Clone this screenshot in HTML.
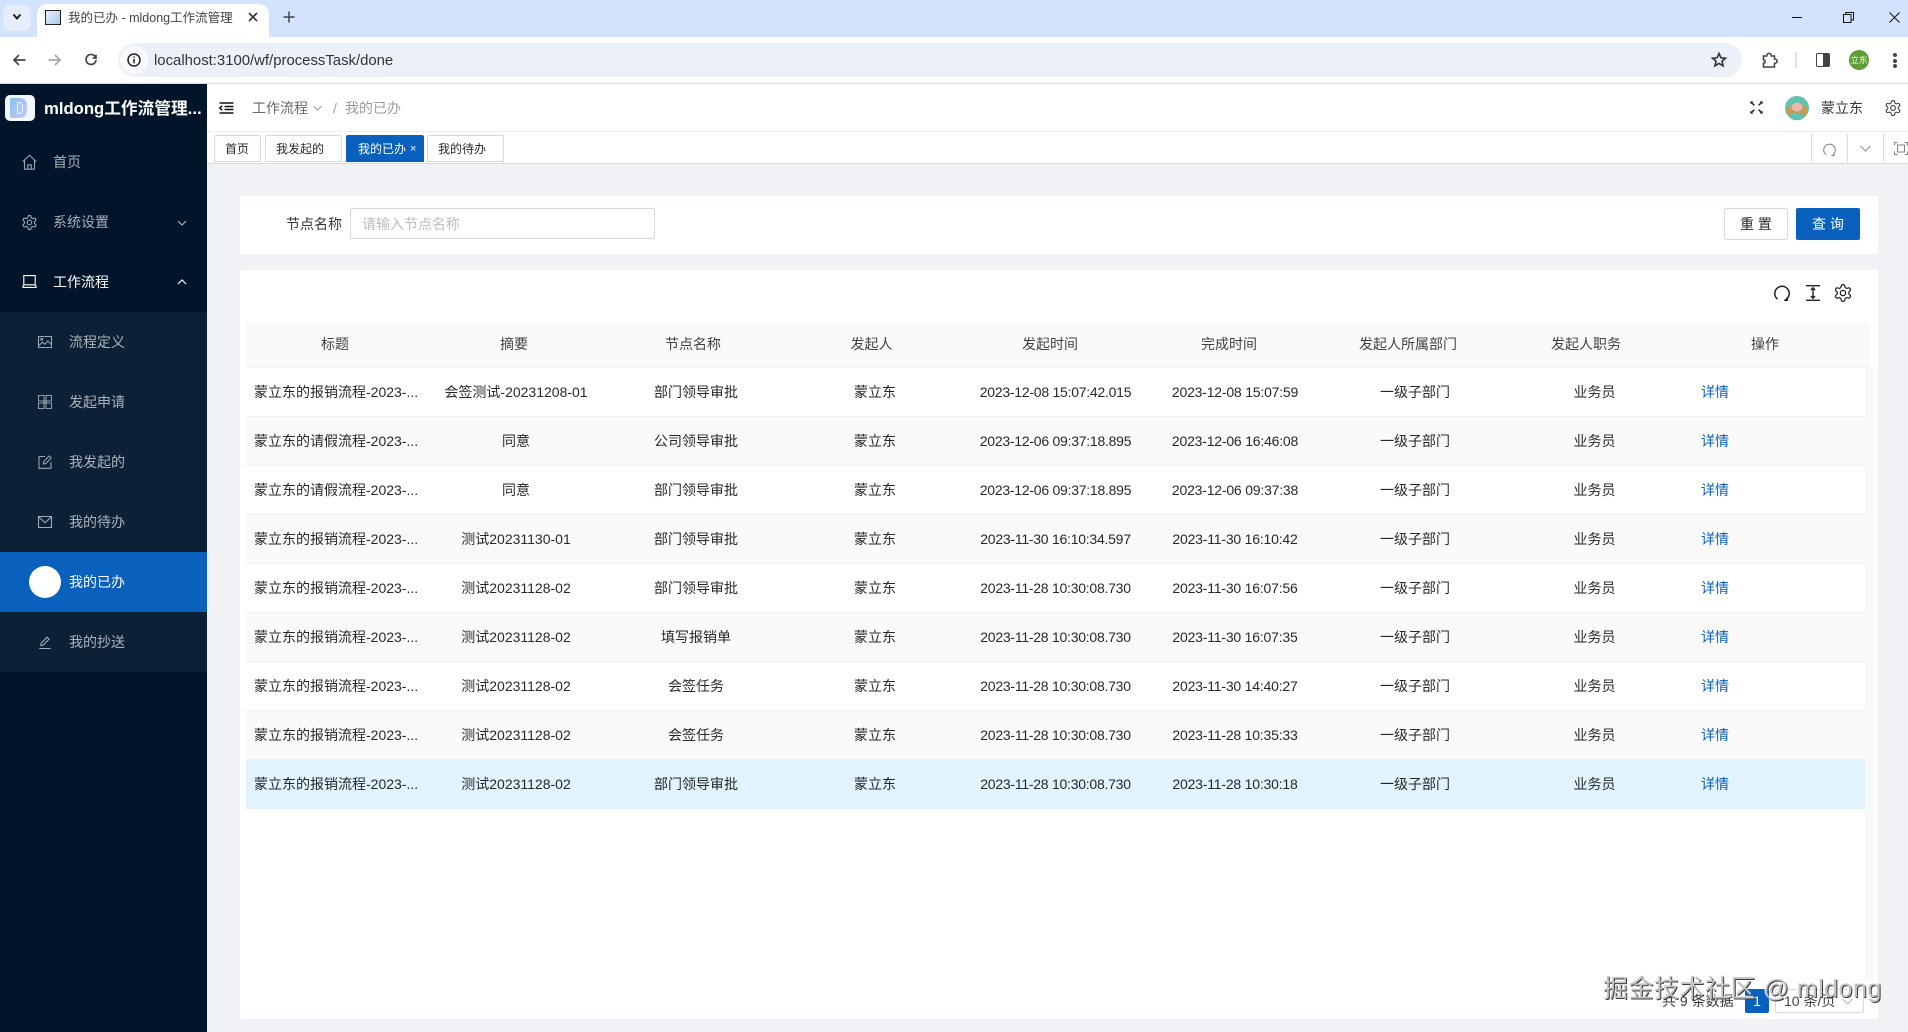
<!DOCTYPE html>
<html lang="zh-CN">
<head>
<meta charset="utf-8">
<title>我的已办 - mldong工作流管理</title>
<style>
html,body{margin:0;padding:0;width:1908px;height:1032px;overflow:hidden;background:#f0f2f5}
body{position:relative;font-family:"Liberation Sans","Noto Sans CJK SC",sans-serif;font-size:14px;color:rgba(0,0,0,.85)}
.a{position:absolute}
.t{position:absolute;white-space:nowrap;line-height:20px;height:20px}
svg{position:absolute;overflow:visible;fill:none;stroke:currentColor}
.tab{position:absolute;top:135px;height:27px;box-sizing:border-box;border:1px solid #d9d9d9;background:#fff;font-size:12px;line-height:26px;color:rgba(0,0,0,.85);white-space:nowrap;border-radius:2px 2px 0 0}
.m{color:rgba(255,255,255,.65)}
.row{position:absolute;left:246px;width:1619px;height:49px;box-sizing:border-box;border-bottom:1px solid #f0f0f0}
.row span{position:absolute;top:14px;line-height:20px;white-space:nowrap;transform:translateX(-50%)}
.row .c1{left:8px;transform:none}
.row .c2{left:270px}.row .c3{left:450px}.row .c4{left:629px}
.row .c5{left:809.5px;letter-spacing:-.25px}.row .c6{left:989px;letter-spacing:-.2px}
.row .c7{left:1169px}.row .c8{left:1348.5px}
.row .c9{left:1455px;transform:none;color:#0960bd}
.th{position:absolute;top:334px;line-height:20px;white-space:nowrap;transform:translateX(-50%);color:rgba(0,0,0,.75)}
</style>
</head>
<body>
<svg width="0" height="0" style="position:absolute">
<defs>
<symbol id="gear" viewBox="0 0 24 24"><path fill="none" stroke="currentColor" d="M12.22 2h-.44a2 2 0 0 0-2 2v.18a2 2 0 0 1-1 1.73l-.43.25a2 2 0 0 1-2 0l-.15-.08a2 2 0 0 0-2.73.73l-.22.38a2 2 0 0 0 .73 2.73l.15.1a2 2 0 0 1 1 1.72v.51a2 2 0 0 1-1 1.74l-.15.09a2 2 0 0 0-.73 2.73l.22.38a2 2 0 0 0 2.73.73l.15-.08a2 2 0 0 1 2 0l.43.25a2 2 0 0 1 1 1.73V20a2 2 0 0 0 2 2h.44a2 2 0 0 0 2-2v-.18a2 2 0 0 1 1-1.73l.43-.25a2 2 0 0 1 2 0l.15.08a2 2 0 0 0 2.73-.73l.22-.39a2 2 0 0 0-.73-2.73l-.15-.08a2 2 0 0 1-1-1.74v-.5a2 2 0 0 1 1-1.74l.15-.09a2 2 0 0 0 .73-2.73l-.22-.38a2 2 0 0 0-2.73-.73l-.15.08a2 2 0 0 1-2 0l-.43-.25a2 2 0 0 1-1-1.73V4a2 2 0 0 0-2-2z"/><circle fill="none" stroke="currentColor" cx="12" cy="12" r="3.2"/></symbol>
</defs>
</svg>

<!-- Browser tab strip -->
<div class="a" style="left:0;top:0;width:1908px;height:37px;background:#d3e3fd"></div>
<div class="a" style="left:3px;top:5px;width:28px;height:26px;background:#e6eefc;border-radius:8px"></div>
<svg style="left:12px;top:13px;color:#1f1f1f;stroke-width:2" width="10" height="8" viewBox="0 0 10 8"><path d="M1.5 1.5 5 5.5 8.5 1.5"/></svg>
<div class="a" style="left:37px;top:4px;width:232px;height:33px;background:#fff;border-radius:10px 10px 0 0"></div>
<div class="a" style="left:45px;top:10px;width:16px;height:15px;box-sizing:border-box;border:1.5px solid #222;background:linear-gradient(135deg,#e4f0fa,#a9c9ee)"></div>
<div class="t" style="left:68px;top:8px;width:167px;overflow:hidden;font-size:12.5px;color:#444">我的已办 - mldong工作流管理</div>
<svg style="left:248px;top:12px;color:#333;stroke-width:1.6" width="10" height="10" viewBox="0 0 10 10"><path d="M1 1 9 9M9 1 1 9"/></svg>
<svg style="left:283px;top:11px;color:#444;stroke-width:1.5" width="12" height="12" viewBox="0 0 12 12"><path d="M6 .5v11M.5 6h11"/></svg>
<svg style="left:1792px;top:11px;color:#111;stroke-width:1" width="20" height="12" viewBox="0 0 20 12"><path d="M0 6.5h10"/></svg>
<svg style="left:1843px;top:12px;color:#111;stroke-width:1" width="11" height="11" viewBox="0 0 11 11"><path d="M.5 2.5h7.5v8H.5zM2.7 2.5V.5h7.8v7.5H8"/></svg>
<svg style="left:1889px;top:12px;color:#111;stroke-width:1" width="11" height="11" viewBox="0 0 11 11"><path d="M.5.5l10 10M10.5.5l-10 10"/></svg>

<!-- Browser toolbar -->
<div class="a" style="left:0;top:37px;width:1908px;height:46px;background:#fff"></div>
<div class="a" style="left:0;top:83px;width:1908px;height:1px;background:#dadce0"></div>
<svg style="left:13px;top:54px;color:#444;stroke-width:1.7" width="13" height="12" viewBox="0 0 13 12"><path d="M12.5 6H1.2M6 1 1 6l5 5"/></svg>
<svg style="left:48px;top:54px;color:#a8a8a8;stroke-width:1.7" width="13" height="12" viewBox="0 0 13 12"><path d="M.5 6h11.3M7 1l5 5-5 5"/></svg>
<svg style="left:85px;top:54px;color:#444;stroke-width:1.7" width="12" height="12" viewBox="0 0 12 12"><path d="M10.6 3.4A5 5 0 1 0 11 6"/><path d="M11 .7v3.3H7.7" /></svg>
<div class="a" style="left:118px;top:43px;width:1624px;height:34px;background:#ecf0f8;border-radius:17px"></div>
<div class="a" style="left:120px;top:46px;width:28px;height:28px;border-radius:14px;background:#f8fafd"></div>
<svg style="left:127px;top:53px;color:#222;stroke-width:1.5" width="14" height="14" viewBox="0 0 14 14"><circle cx="7" cy="7" r="6"/><path d="M7 6v4.2M7 3.4v1.4"/></svg>
<div class="t" style="left:154px;top:51px;font-size:14.9px;color:#333">localhost:3100/wf/processTask/done</div>
<svg style="left:1711px;top:52px;color:#333;stroke-width:1.6" width="16" height="16" viewBox="0 0 16 16"><path d="M8 1.5l1.9 4.3 4.6.4-3.5 3 1.1 4.6L8 11.4l-4.1 2.4 1.1-4.6-3.5-3 4.6-.4z"/></svg>
<svg style="left:1762px;top:52px;color:#444;stroke-width:1.6" width="17" height="16" viewBox="0 0 17 16"><path d="M1.5 4h3.2c0-3.5 4.6-3.5 4.6 0h3.2v3c3.4 0 3.4 4.4 0 4.4V15H1.5v-3.8c2.3 0 2.3-3.2 0-3.2z"/></svg>
<div class="a" style="left:1795px;top:52px;width:2px;height:16px;background:#dbe3ee"></div>
<div class="a" style="left:1816px;top:53px;width:14px;height:14px;box-sizing:border-box;border:1.6px solid #444;border-radius:2px;background:linear-gradient(90deg,#fff 50%,#444 50%)"></div>
<div class="a" style="left:1849px;top:50px;width:20px;height:20px;border-radius:50%;background:#5f9e35;color:#fff;font-size:8.5px;line-height:20px;text-align:center">立东</div>
<div class="a" style="left:1893px;top:53px;width:4px;height:4px;border-radius:50%;background:#444"></div>
<div class="a" style="left:1893px;top:58.5px;width:4px;height:4px;border-radius:50%;background:#444"></div>
<div class="a" style="left:1893px;top:64px;width:4px;height:4px;border-radius:50%;background:#444"></div>

<!-- Sidebar -->
<div class="a" style="left:0;top:84px;width:207px;height:948px;background:#001529"></div>
<div class="a" style="left:5px;top:95px;width:30px;height:26px;border-radius:5px;background:#f0f7fd"></div>
<div class="a" style="left:10px;top:98px;width:17px;height:20px;border-radius:1px 7px 7px 1px;background:linear-gradient(135deg,#8cc2ef,#c4c8f2)"></div>
<div class="a" style="left:17px;top:102px;width:6px;height:12px;border-radius:1px 4px 4px 1px;border:1px solid #eef5fc;box-sizing:border-box"></div>
<div class="t" style="left:44px;top:99px;color:#fff;font-weight:700;font-size:16.7px">mldong工作流管理...</div>

<svg style="left:22px;top:154px;color:#9aa5b0;stroke-width:1.1" width="15" height="16" viewBox="0 0 15 16"><path d="M.8 7.6 7.5 1.2l6.7 6.4M2.5 6.3v8.9h10V6.3M5.8 15.2v-4.4h3.4v4.4"/></svg>
<div class="t m" style="left:53px;top:152px">首页</div>

<svg style="left:21px;top:214px;color:#9aa5b0;stroke-width:1.6" width="17" height="17" viewBox="0 0 24 24"><use href="#gear"/></svg>
<div class="t m" style="left:53px;top:212px">系统设置</div>
<svg style="left:177px;top:220px;color:#a8b0ba;stroke-width:1.2" width="10" height="6" viewBox="0 0 10 6"><path d="M1 1l4 4 4-4"/></svg>

<svg style="left:22px;top:275px;color:#fff;stroke-width:1.1" width="15" height="13" viewBox="0 0 15 13"><path d="M1.8.6h11.4v9.2H1.8zM.5 12.4h14M.5 12.4l1.3-2.6M14.5 12.4l-1.3-2.6"/></svg>
<div class="t" style="left:53px;top:272px;color:#fff">工作流程</div>
<svg style="left:177px;top:279px;color:#fff;stroke-width:1.2" width="10" height="6" viewBox="0 0 10 6"><path d="M1 5l4-4 4 4"/></svg>

<div class="a" style="left:0;top:312px;width:207px;height:360px;background:#0c2135"></div>
<svg style="left:38px;top:336px;color:#98a4af;stroke-width:1.1" width="14" height="12" viewBox="0 0 14 12"><path d="M.5.5h13v11H.5zM.8 9.6l3.6-3.4 2.4 2 3-3.2 3.8 3.6"/><circle cx="3.7" cy="3.2" r=".9"/></svg>
<div class="t m" style="left:69px;top:332px">流程定义</div>

<svg style="left:38px;top:395px;color:#8f9ba7;stroke-width:1.1" width="14" height="14" viewBox="0 0 14 14"><path d="M.5.5h5.5v5.5H.5zM8 .5h5.5v5.5H8zM.5 8h5.5v5.5H.5zM8 8h5.5v5.5H8z"/><path d="M5 5h4v4H5z" fill="#7f8b97" stroke="none"/></svg>
<div class="t m" style="left:69px;top:392px">发起申请</div>

<svg style="left:38px;top:455px;color:#98a4af;stroke-width:1.1" width="14" height="14" viewBox="0 0 14 14"><path d="M7 1.5H1v11.8h12V7M5.4 9l.5-2.6L11.2.9l2 2L7.9 8.5z"/></svg>
<div class="t m" style="left:69px;top:452px">我发起的</div>

<svg style="left:38px;top:516px;color:#a0abb6;stroke-width:1.1" width="14" height="12" viewBox="0 0 14 12"><path d="M.5.5h13v11H.5zM.5.7 7 6.6 13.5.7"/></svg>
<div class="t m" style="left:69px;top:512px">我的待办</div>

<div class="a" style="left:0;top:552px;width:207px;height:60px;background:#0960bd"></div>
<div class="a" style="left:29px;top:566px;width:32px;height:32px;border-radius:50%;background:#fff"></div>
<div class="t" style="left:69px;top:572px;color:#fff">我的已办</div>

<svg style="left:39px;top:636px;color:#a4aeb8;stroke-width:1.1" width="12" height="13" viewBox="0 0 12 13"><path d="M.3 12.5h11.4M1.8 9.6l.5-2.5L8 1.2l2 2-5.7 5.9z"/></svg>
<div class="t m" style="left:69px;top:632px">我的抄送</div>

<!-- Header -->
<div class="a" style="left:207px;top:84px;width:1701px;height:47px;background:#fff"></div>
<div class="a" style="left:207px;top:131px;width:1701px;height:1px;background:#eee"></div>
<svg style="left:219px;top:102px;color:#111;stroke-width:1.5" width="15" height="12" viewBox="0 0 15 12"><path d="M.5 1h14M5.5 4.5h9M5.5 7.5h9M.5 11h14"/><path d="M3.2 3.8.8 6l2.4 2.2" /></svg>
<div class="t" style="left:252px;top:98px;color:rgba(0,0,0,.6)">工作流程</div>
<svg style="left:313px;top:105px;color:#9a9a9a;stroke-width:1" width="9" height="6" viewBox="0 0 9 6"><path d="M.5 1l4 4 4-4"/></svg>
<div class="t" style="left:333px;top:98px;color:rgba(0,0,0,.4)">/</div>
<div class="t" style="left:345px;top:98px;color:rgba(0,0,0,.4)">我的已办</div>

<svg style="left:1750px;top:101px;color:#222;stroke-width:1.5" width="13" height="13" viewBox="0 0 13 13"><path d="M.8.8l3.6 3.6M12.2.8 8.6 4.4M.8 12.2l3.6-3.6M12.2 12.2 8.6 8.6"/><path d="M.4.4h3L.4 3.4zM12.6.4h-3l3 3zM.4 12.6h3l-3-3zM12.6 12.6h-3l3-3z" fill="#222" stroke="none"/></svg>
<svg style="left:1785px;top:96px;stroke:none" width="24" height="24" viewBox="0 0 24 24"><circle cx="12" cy="12" r="12" fill="#5fc4ad"/><path d="M1 14c3-5 5-6 11-6s8 1 11 6c-1 6-5 10-11 10S2 20 1 14z" fill="#c79a58"/><ellipse cx="12" cy="11" rx="5.5" ry="4.5" fill="#e9b8a8"/><path d="M5 18h14v4a12 12 0 0 1-14 0z" fill="#5fc4ad"/></svg>
<div class="t" style="left:1821px;top:98px;color:rgba(0,0,0,.8)">蒙立东</div>
<svg style="left:1884px;top:99px;color:#444;stroke-width:1.5" width="18" height="18" viewBox="0 0 24 24"><use href="#gear"/></svg>

<!-- Tabs bar -->
<div class="a" style="left:207px;top:132px;width:1701px;height:31px;background:#fff"></div>
<div class="a" style="left:207px;top:163px;width:1701px;height:1px;background:#d9d9d9"></div>
<div class="tab" style="left:214px;width:47px;padding-left:10px">首页</div>
<div class="tab" style="left:265px;width:77px;padding-left:10px">我发起的</div>
<div class="tab" style="left:346px;width:78px;padding-left:11px;background:#0960bd;border-color:#0960bd;color:#fff">我的已办<span style="position:absolute;left:63px;top:0;font-size:11px">×</span></div>
<div class="tab" style="left:427px;width:77px;padding-left:10px">我的待办</div>
<div class="a" style="left:1811px;top:134px;width:1px;height:28px;background:#d9d9d9"></div>
<div class="a" style="left:1847px;top:134px;width:1px;height:28px;background:#d9d9d9"></div>
<div class="a" style="left:1883px;top:134px;width:1px;height:28px;background:#d9d9d9"></div>
<svg style="left:1823px;top:143px;color:#888;stroke-width:1.1" width="13" height="13" viewBox="0 0 13 13"><path d="M3 11.6A5.8 5.8 0 1 1 10 11.6"/><path d="M8.4 12.6h2.6v-2.4" /></svg>
<svg style="left:1860px;top:145px;color:#999;stroke-width:1.2" width="11" height="7" viewBox="0 0 11 7"><path d="M.6 1l4.9 5 4.9-5"/></svg>
<svg style="left:1894px;top:142px;color:#888;stroke-width:1.1" width="14" height="13" viewBox="0 0 14 13"><path d="M3.5 3h7v7h-7zM.5 3.5V.5h3M10.5.5h3v3M.5 9.5v3h3M10.5 12.5h3v-3"/></svg>

<!-- Search card -->
<div class="a" style="left:240px;top:196px;width:1638px;height:58px;background:#fff;border-radius:2px"></div>
<div class="t" style="left:286px;top:214px;color:rgba(0,0,0,.8)">节点名称</div>
<div class="a" style="left:350px;top:208px;width:305px;height:31px;box-sizing:border-box;border:1px solid #d9d9d9;border-radius:2px;background:#fff"></div>
<div class="t" style="left:362px;top:214px;color:#bfbfbf">请输入节点名称</div>
<div class="a" style="left:1724px;top:208px;width:64px;height:32px;box-sizing:border-box;border:1px solid #d9d9d9;border-radius:2px;background:#fff;text-align:center;line-height:30px;color:rgba(0,0,0,.85)">重 置</div>
<div class="a" style="left:1796px;top:208px;width:64px;height:32px;border-radius:2px;background:#0960bd;text-align:center;line-height:32px;color:#fff">查 询</div>

<!-- Table card -->
<div class="a" style="left:240px;top:270px;width:1638px;height:749px;background:#fff;border-radius:2px"></div>
<svg style="left:1774px;top:285px;color:#222;stroke-width:1.5" width="16" height="16" viewBox="0 0 16 16"><path d="M3.6 14.2A7.2 7.2 0 1 1 12.4 14.2"/><path d="M10.2 15.2h3v-2.8" fill="#222"/></svg>
<svg style="left:1806px;top:285px;color:#222;stroke-width:1.4" width="14" height="16" viewBox="0 0 14 16"><path d="M0 .7h14M0 15.3h14M7 3v10"/><path d="M5 5 7 2.8 9 5M5 11l2 2.2L9 11"/></svg>
<svg style="left:1833px;top:283px;color:#222;stroke-width:1.5" width="20" height="20" viewBox="0 0 24 24"><use href="#gear"/></svg>

<div class="a" style="left:246px;top:322px;width:1624px;height:44px;background:#fafafa"></div>
<div class="a" style="left:246px;top:366px;width:1624px;height:2px;background:#f5f5f5"></div>
<div class="a" style="left:1865px;top:368px;width:8px;height:612px;background:#f8f8f8"></div>
<span class="th" style="left:335px">标题</span>
<span class="th" style="left:514px">摘要</span>
<span class="th" style="left:693px">节点名称</span>
<span class="th" style="left:871.5px">发起人</span>
<span class="th" style="left:1050px">发起时间</span>
<span class="th" style="left:1229px">完成时间</span>
<span class="th" style="left:1408px">发起人所属部门</span>
<span class="th" style="left:1586px">发起人职务</span>
<span class="th" style="left:1765px">操作</span>

<div class="row" style="top:368px"><span class="c1">蒙立东的报销流程-2023-...</span><span class="c2">会签测试-20231208-01</span><span class="c3">部门领导审批</span><span class="c4">蒙立东</span><span class="c5">2023-12-08 15:07:42.015</span><span class="c6">2023-12-08 15:07:59</span><span class="c7">一级子部门</span><span class="c8">业务员</span><span class="c9">详情</span></div>
<div class="row" style="top:417px;background:#fafafa"><span class="c1">蒙立东的请假流程-2023-...</span><span class="c2">同意</span><span class="c3">公司领导审批</span><span class="c4">蒙立东</span><span class="c5">2023-12-06 09:37:18.895</span><span class="c6">2023-12-06 16:46:08</span><span class="c7">一级子部门</span><span class="c8">业务员</span><span class="c9">详情</span></div>
<div class="row" style="top:466px"><span class="c1">蒙立东的请假流程-2023-...</span><span class="c2">同意</span><span class="c3">部门领导审批</span><span class="c4">蒙立东</span><span class="c5">2023-12-06 09:37:18.895</span><span class="c6">2023-12-06 09:37:38</span><span class="c7">一级子部门</span><span class="c8">业务员</span><span class="c9">详情</span></div>
<div class="row" style="top:515px;background:#fafafa"><span class="c1">蒙立东的报销流程-2023-...</span><span class="c2">测试20231130-01</span><span class="c3">部门领导审批</span><span class="c4">蒙立东</span><span class="c5">2023-11-30 16:10:34.597</span><span class="c6">2023-11-30 16:10:42</span><span class="c7">一级子部门</span><span class="c8">业务员</span><span class="c9">详情</span></div>
<div class="row" style="top:564px"><span class="c1">蒙立东的报销流程-2023-...</span><span class="c2">测试20231128-02</span><span class="c3">部门领导审批</span><span class="c4">蒙立东</span><span class="c5">2023-11-28 10:30:08.730</span><span class="c6">2023-11-30 16:07:56</span><span class="c7">一级子部门</span><span class="c8">业务员</span><span class="c9">详情</span></div>
<div class="row" style="top:613px;background:#fafafa"><span class="c1">蒙立东的报销流程-2023-...</span><span class="c2">测试20231128-02</span><span class="c3">填写报销单</span><span class="c4">蒙立东</span><span class="c5">2023-11-28 10:30:08.730</span><span class="c6">2023-11-30 16:07:35</span><span class="c7">一级子部门</span><span class="c8">业务员</span><span class="c9">详情</span></div>
<div class="row" style="top:662px"><span class="c1">蒙立东的报销流程-2023-...</span><span class="c2">测试20231128-02</span><span class="c3">会签任务</span><span class="c4">蒙立东</span><span class="c5">2023-11-28 10:30:08.730</span><span class="c6">2023-11-30 14:40:27</span><span class="c7">一级子部门</span><span class="c8">业务员</span><span class="c9">详情</span></div>
<div class="row" style="top:711px;background:#fafafa"><span class="c1">蒙立东的报销流程-2023-...</span><span class="c2">测试20231128-02</span><span class="c3">会签任务</span><span class="c4">蒙立东</span><span class="c5">2023-11-28 10:30:08.730</span><span class="c6">2023-11-28 10:35:33</span><span class="c7">一级子部门</span><span class="c8">业务员</span><span class="c9">详情</span></div>
<div class="row" style="top:760px;background:#e1f3fd;border-bottom:0"><span class="c1">蒙立东的报销流程-2023-...</span><span class="c2">测试20231128-02</span><span class="c3">部门领导审批</span><span class="c4">蒙立东</span><span class="c5">2023-11-28 10:30:08.730</span><span class="c6">2023-11-28 10:30:18</span><span class="c7">一级子部门</span><span class="c8">业务员</span><span class="c9">详情</span></div>

<!-- Pagination -->
<div class="t" style="left:1662px;top:991px;color:rgba(0,0,0,.8)">共 9 条数据</div>
<div class="a" style="left:1745px;top:989px;width:24px;height:24px;border-radius:2px;background:#0960bd;color:#fff;text-align:center;line-height:24px">1</div>
<div class="a" style="left:1775px;top:989px;width:89px;height:24px;box-sizing:border-box;border:1px solid #d9d9d9;border-radius:2px;background:#fff"></div>
<div class="t" style="left:1784px;top:991px;color:rgba(0,0,0,.75)">10 条/页</div>
<svg style="left:1842px;top:998px;color:#bfbfbf;stroke-width:1.2" width="11" height="7" viewBox="0 0 11 7"><path d="M.6 1l4.9 5 4.9-5"/></svg>

<!-- Watermark -->
<div class="t" style="left:1603px;top:974px;height:30px;line-height:30px;font-size:25px;letter-spacing:.5px;color:#c4c4c4;text-shadow:1px 1px 0 #3c3c3c,-1px -1px 0 rgba(255,255,255,.75)">掘金技术社区 @ mldong</div>
</body>
</html>
